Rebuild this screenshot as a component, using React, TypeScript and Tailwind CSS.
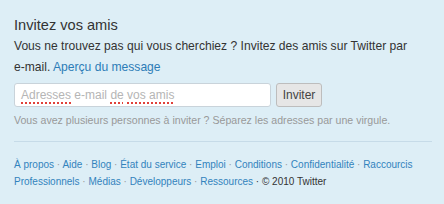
const footerRows = [
	["À propos", "Aide", "Blog", "État du service", "Emploi", "Conditions", "Confidentialité", "Raccourcis"],
	["Professionnels", "Médias", "Développeurs", "Ressources"],
];

function Squiggle({ children }: { children: string }) {
	return (
		<span className="underline decoration-dotted decoration-[#e0413a] decoration-[1.5px] underline-offset-[3px]">
			{children}
		</span>
	);
}

export default function App() {
	return (
		<div
			className="h-[204px] w-[444px] bg-[#ddeef6] px-[14px] pt-[12px] text-[#333]"
			style={{ fontFamily: '"Liberation Sans", Arial, sans-serif' }}
		>
			<h2 className="mt-[2px] text-[14.6px] leading-[22px] font-normal">Invitez vos amis</h2>
			<p className="mt-0 text-[12.1px] leading-[21px]">
				Vous ne trouvez pas qui vous cherchiez ? Invitez des amis sur Twitter par{" "}
				<span className="whitespace-nowrap">e-mail.</span>{" "}
				<a href="#" className="text-[#2c7cb7]">
					Aperçu du message
				</a>
			</p>

			<div className="mt-[5px] flex items-center gap-[5px]">
				<div className="flex h-[24px] w-[257px] items-center rounded-[3px] border border-[#c9d3da] bg-white px-[6px] text-[12px] text-[#b5b5b5]">
					<Squiggle>Adresses</Squiggle>
					<span className="whitespace-pre"> e-mail </span>
					<Squiggle>de</Squiggle>
					<span className="whitespace-pre"> </span>
					<Squiggle>vos amis</Squiggle>
				</div>
				<button className="h-[24px] w-[46px] rounded-[3px] border border-[#bdbdbd] bg-[#e6e6e6] text-[12px] text-[#444]">
					Inviter
				</button>
			</div>
			<p className="mt-[6px] text-[10.6px] leading-[14px] text-[#999]">
				Vous avez plusieurs personnes à inviter ? Séparez les adresses par une virgule.
			</p>

			<div className="mt-[14px] mr-[-2px] border-t border-[#c6dbe8]" />

			<div className="mt-[14px] text-[10px] leading-[17px] text-[#999]">
				{footerRows.map((row, i) => (
					<p key={i}>
						{row.map((label, j) => (
							<span key={label}>
								{j > 0 ? " · " : null}
								<a href="#" className="text-[#3283bd]">
									{label}
								</a>
							</span>
						))}
						{i === 1 ? <span className="text-[#333]"> · © 2010 Twitter</span> : null}
					</p>
				))}
			</div>
		</div>
	);
}
